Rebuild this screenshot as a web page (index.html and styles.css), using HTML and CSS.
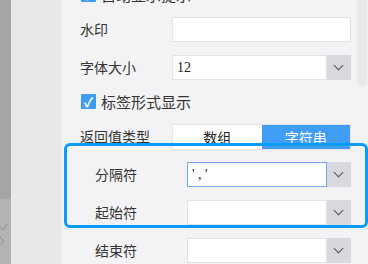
FILE: index.html
```html
<!DOCTYPE html>
<html lang="zh">
<head>
  <meta charset="UTF-8" />
  <title>属性面板</title>
  <link rel="stylesheet" href="styles.css">
</head>
<body>
  <div class="strip">
    <div class="strip-top"></div>
    <div class="strip-bottom">
      <svg class="strip-icon" width="8" height="30" viewBox="0 0 8 30">
        <path d="M0 8 L3 11 L7 5" fill="none" stroke="#8a8a8a" stroke-width="1"/>
        <path d="M0 18 L4 22 L0 26" fill="none" stroke="#8a8a8a" stroke-width="1"/>
      </svg>
    </div>
  </div>
  <div class="side"></div>

  <div class="panel">
    <div class="form">
      <div class="row check">
        <span class="box">&#10003;</span>
        <span class="check-text">自动显示提示</span>
      </div>

      <div class="row">
        <label class="label">水印</label>
        <input class="field" type="text" value="">
      </div>

      <div class="row">
        <label class="label">字体大小</label>
        <div class="select">
          <input class="field num" type="text" value="12">
          <span class="arrow"></span>
        </div>
      </div>

      <div class="row check">
        <span class="box">&#10003;</span>
        <span class="check-text">标签形式显示</span>
      </div>

      <div class="row">
        <label class="label">返回值类型</label>
        <div class="segment">
          <span class="seg">数组</span>
          <span class="seg active">字符串</span>
        </div>
      </div>

      <div class="row sub">
        <label class="label">分隔符</label>
        <div class="select">
          <input class="field num focus" type="text" value="' , '">
          <span class="arrow"></span>
        </div>
      </div>

      <div class="row sub">
        <label class="label">起始符</label>
        <div class="select">
          <input class="field" type="text" value="">
          <span class="arrow"></span>
        </div>
      </div>

      <div class="row sub">
        <label class="label">结束符</label>
        <div class="select">
          <input class="field" type="text" value="">
          <span class="arrow"></span>
        </div>
      </div>
    </div>

    <!-- 高亮框 -->
    <div class="highlight"></div>
    <div class="thumb"></div>
  </div>
</body>
</html>
```

FILE: styles.css
```css
body {
  margin: 0;
  height: 264px;
  overflow: hidden;
  display: flex;
  font-family: "Noto Sans CJK SC", "Noto Sans", sans-serif;
  font-size: 14px;
  color: #333;
  background-color: #f3f3f5;
}

.strip {
  width: 11px;
  flex-shrink: 0;
  display: flex;
  flex-direction: column;
}

.strip-top {
  height: 199px;
  background-color: #a5a5a5;
}

.strip-bottom {
  flex: 1;
  background-color: #b3b3b3;
  padding-top: 20px;
}

.strip-icon {
  display: block;
}

.side {
  width: 50px;
  flex-shrink: 0;
  background-color: #e8e8e8;
  border-right: 1px solid #ececec;
}

.panel {
  flex: 1;
  min-width: 0;
  position: relative;
  padding: 0 17px 0 18px;
}

.form {
  margin-top: -14px;
  display: flex;
  flex-direction: column;
  gap: 13px;
}

.row {
  display: flex;
  align-items: center;
  height: 25px;
}

.row.check {
  height: 16px;
  margin-bottom: 2px;
}

.row.sub {
  padding-left: 15px;
}

.label {
  width: 92px;
  flex-shrink: 0;
  line-height: 25px;
}

.box {
  width: 15px;
  height: 15px;
  margin-left: 1px;
  flex-shrink: 0;
  background-color: #3f9cf4;
  color: #fff;
  font-size: 13px;
  font-weight: bold;
  line-height: 15px;
  text-align: center;
  border-radius: 1px;
}

.check-text {
  margin-left: 5px;
  font-size: 15px;
  white-space: nowrap;
}

.field {
  flex: 1;
  min-width: 0;
  width: 0;
  height: 25px;
  box-sizing: border-box;
  border: 1px solid #e3e3e6;
  background-color: #fff;
  padding: 0 4px;
  margin: 0;
  outline: none;
  font-family: "Liberation Serif", serif;
  font-size: 14px;
  color: #222;
}

.field.focus {
  border-color: #6ea6f0;
}

.select {
  flex: 1;
  min-width: 0;
  display: flex;
}

.arrow {
  width: 24px;
  height: 25px;
  flex-shrink: 0;
  background-color: #d9d9dd;
  position: relative;
}

.arrow::after {
  content: "";
  position: absolute;
  left: 8px;
  top: 7px;
  width: 6px;
  height: 6px;
  border-right: 1.5px solid #555;
  border-bottom: 1.5px solid #555;
  transform: rotate(45deg);
}

.segment {
  flex: 1;
  display: flex;
  height: 26px;
  border: 1px solid #e3e3e6;
  box-sizing: border-box;
}

.seg {
  flex: 1;
  text-align: center;
  line-height: 24px;
  background-color: #fff;
  color: #222;
}

.seg.active {
  background-color: #409df5;
  color: #fff;
}

.highlight {
  position: absolute;
  left: 2px;
  top: 143px;
  width: 304px;
  height: 85px;
  box-sizing: border-box;
  border: 3px solid #0a9bff;
  border-radius: 6px;
}

.thumb {
  position: absolute;
  right: 1px;
  top: -10px;
  width: 10px;
  height: 97px;
  background-color: #e9e9eb;
  border-radius: 5px;
}
```
